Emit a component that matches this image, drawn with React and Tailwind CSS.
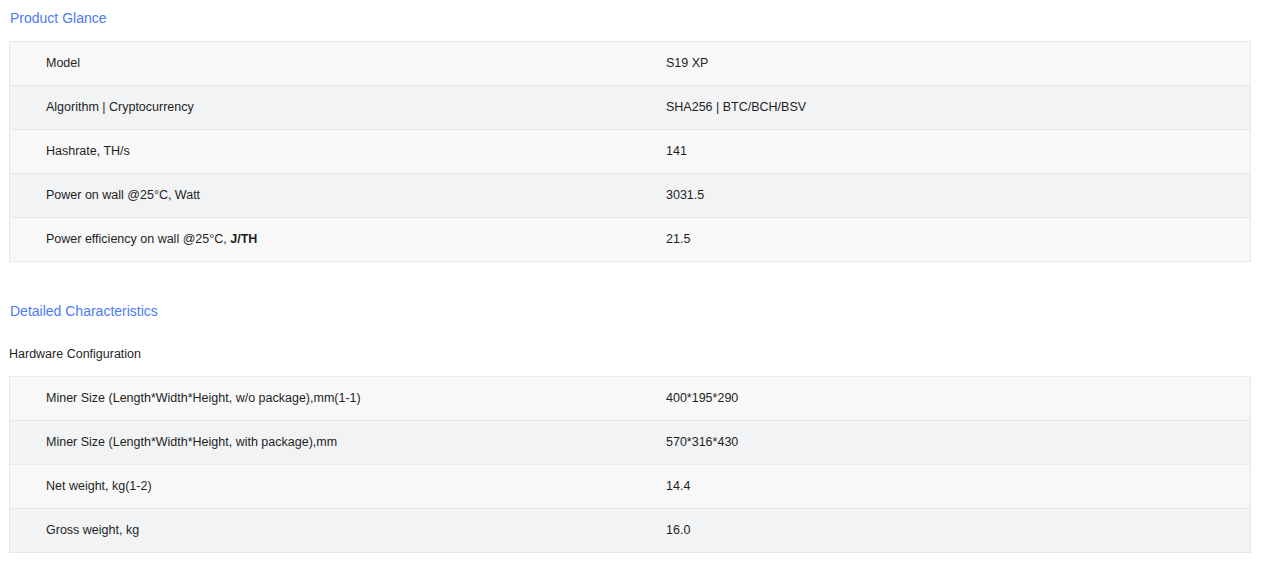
const glance = [
  { label: "Model", value: "S19 XP" },
  { label: "Algorithm | Cryptocurrency", value: "SHA256 | BTC/BCH/BSV" },
  { label: "Hashrate, TH/s", value: "141" },
  { label: "Power on wall @25°C, Watt", value: "3031.5" },
  {
    label: (
      <>
        Power efficiency on wall @25°C, <b>J/TH</b>
      </>
    ),
    value: "21.5",
  },
];

const hardware = [
  { label: "Miner Size (Length*Width*Height, w/o package),mm(1-1)", value: "400*195*290" },
  { label: "Miner Size (Length*Width*Height, with package),mm", value: "570*316*430" },
  { label: "Net weight, kg(1-2)", value: "14.4" },
  { label: "Gross weight, kg", value: "16.0" },
];

function SpecTable({ rows }) {
  return (
    <div className="border border-[#e8e8e8]">
      {rows.map((row, i) => (
        <div
          key={i}
          className={`grid grid-cols-2 h-[43px] text-[12.5px] leading-[18px] text-[#1f1f1f] ${
            i % 2 === 0 ? "bg-[#f8f8f8]" : "bg-[#f2f3f5]"
          } ${i < rows.length - 1 ? "border-b border-[#e8e8e8] box-content" : ""}`}
        >
          <div className="flex items-center pl-[36px] pb-[2px]">
            <span>{row.label}</span>
          </div>
          <div className="flex items-center pl-[36px] pb-[2px]">
            <span>{row.value}</span>
          </div>
        </div>
      ))}
    </div>
  );
}

export default function App() {
  return (
    <div
      className="min-h-screen bg-white pl-[9px] pr-[11px] pt-[8px]"
      style={{ fontFamily: '"Liberation Sans", Arial, sans-serif' }}
    >
      <h2 className="text-[14px] leading-[20px] text-[#4b7bf5] pl-[1px] mb-[13px]">Product Glance</h2>
      <SpecTable rows={glance} />

      <h2 className="text-[14px] leading-[20px] text-[#4b7bf5] pl-[1px] mt-[39px]">Detailed Characteristics</h2>
      <div className="text-[12.5px] leading-[18px] text-[#1f1f1f] mt-[24px] mb-[13px]">Hardware Configuration</div>
      <SpecTable rows={hardware} />
    </div>
  );
}
